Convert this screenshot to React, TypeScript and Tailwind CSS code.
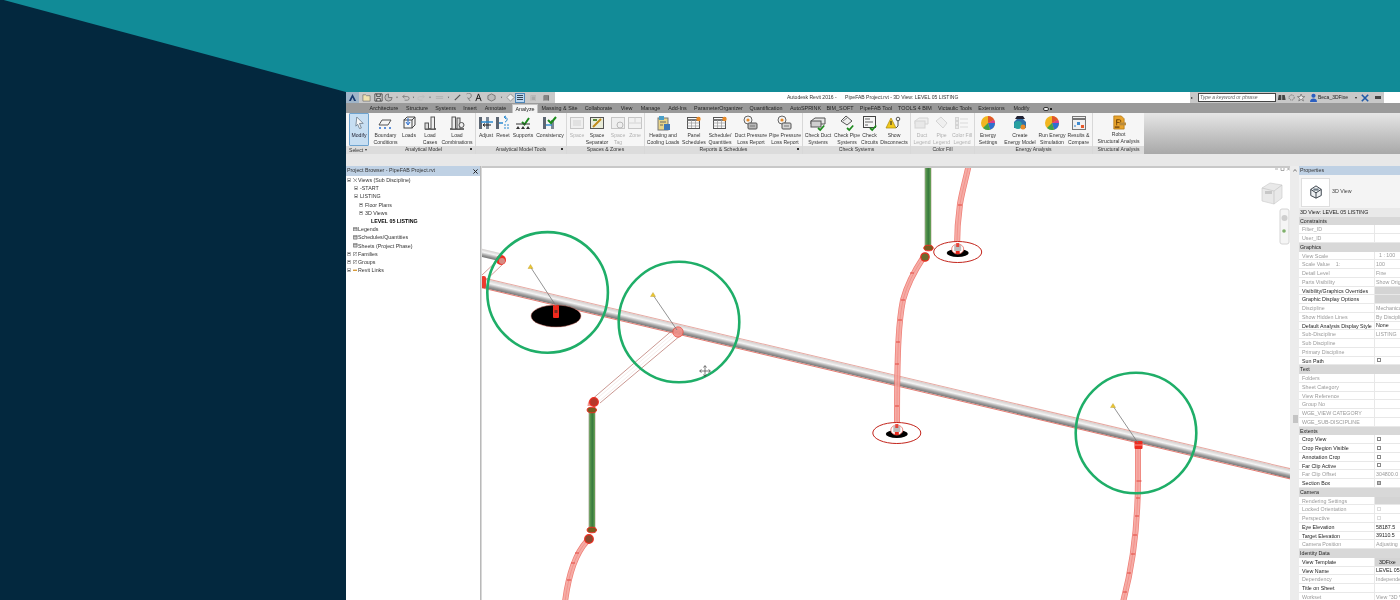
import React from "react";

type Btn = { k: string; l: string[]; w: string; off?: boolean };
type Group = { name: string; w: string; arrow?: boolean; btns: Btn[] };

const groups: Group[] = [
  { name: "Analytical Model", w: "w-[104px]", arrow: true, btns: [
    { k: "boundary", l: ["Boundary", "Conditions"], w: "w-[27px]" },
    { k: "loads", l: ["Loads"], w: "w-[20px]" },
    { k: "cases", l: ["Load", "Cases"], w: "w-[22px]" },
    { k: "combos", l: ["Load", "Combinations"], w: "w-[32px]" },
  ] },
  { name: "Analytical Model Tools", w: "w-[91px]", arrow: true, btns: [
    { k: "adjust", l: ["Adjust"], w: "w-[20px]" },
    { k: "reset", l: ["Reset"], w: "w-[14px]" },
    { k: "supports", l: ["Supports"], w: "w-[26px]" },
    { k: "consistency", l: ["Consistency"], w: "w-[28px]" },
  ] },
  { name: "Spaces & Zones", w: "w-[78px]", btns: [
    { k: "space", l: ["Space"], w: "w-[20px]", off: true },
    { k: "separator", l: ["Space", "Separator"], w: "w-[20px]" },
    { k: "tag", l: ["Space", "Tag"], w: "w-[22px]", off: true },
    { k: "zone", l: ["Zone"], w: "w-[12px]", off: true },
  ] },
  { name: "Reports & Schedules", w: "w-[158px]", arrow: true, btns: [
    { k: "heating", l: ["Heating and", "Cooling Loads"], w: "w-[36px]" },
    { k: "panel", l: ["Panel", "Schedules"], w: "w-[26px]" },
    { k: "schedule", l: ["Schedule/", "Quantities"], w: "w-[26px]" },
    { k: "duct", l: ["Duct Pressure", "Loss Report"], w: "w-[36px]" },
    { k: "pipe", l: ["Pipe Pressure", "Loss Report"], w: "w-[32px]" },
  ] },
  { name: "Check Systems", w: "w-[108px]", btns: [
    { k: "cduct", l: ["Check Duct", "Systems"], w: "w-[30px]" },
    { k: "cpipe", l: ["Check Pipe", "Systems"], w: "w-[28px]" },
    { k: "ccirc", l: ["Check", "Circuits"], w: "w-[17px]" },
    { k: "disc", l: ["Show", "Disconnects"], w: "w-[32px]" },
  ] },
  { name: "Color Fill", w: "w-[64px]", btns: [
    { k: "dleg", l: ["Duct", "Legend"], w: "w-[22px]", off: true },
    { k: "pleg", l: ["Pipe", "Legend"], w: "w-[17px]", off: true },
    { k: "cleg", l: ["Color Fill", "Legend"], w: "w-[24px]", off: true },
  ] },
  { name: "Energy Analysis", w: "w-[118px]", btns: [
    { k: "pie", l: ["Energy", "Settings"], w: "w-[26px]" },
    { k: "create", l: ["Create", "Energy Model"], w: "w-[38px]" },
    { k: "pie2", l: ["Run Energy", "Simulation"], w: "w-[26px]" },
    { k: "results", l: ["Results &", "Compare"], w: "w-[27px]" },
  ] },
];

function RibbonIcon({ k }: { k: string }) {
  const c = "w-[16px] h-[16px] overflow-visible";
  const S = (p: { children: React.ReactNode }) => (
    <svg viewBox="0 0 16 16" className={c} fill="none">{p.children}</svg>
  );
  const tick = <path d="M8 13l2.2 2 4-4.5" stroke="#1c8a1c" strokeWidth="1.7" />;
  switch (k) {
    case "boundary":
      return <S><path d="M4 5h9l-3 5H1z" fill="#f4f4f4" stroke="#555" /><circle cx="2" cy="13" r="1" fill="#2b6fd0" /><circle cx="12" cy="13" r="1" fill="#2b6fd0" /><circle cx="7" cy="13" r="1" fill="#2b6fd0" /></S>;
    case "loads":
      return <S><rect x="3" y="5" width="8" height="8" stroke="#444" /><path d="M3 5l3-3h8v8l-3 3M11 5l3-3" stroke="#444" /><path d="M7 3v6M5 7l2 3 2-3" stroke="#2b6fd0" /></S>;
    case "cases":
      return <S><path d="M3 14h11" stroke="#333" strokeWidth="1.4" /><rect x="3" y="8" width="3.5" height="6" stroke="#555" fill="#ddd" /><rect x="9" y="2" width="3.5" height="12" stroke="#555" fill="#eee" /></S>;
    case "combos":
      return <S><path d="M1 14h14" stroke="#333" strokeWidth="1.4" /><rect x="3" y="2" width="3.5" height="12" stroke="#555" fill="#eee" /><rect x="8" y="3" width="3" height="11" stroke="#555" fill="#ddd" /><circle cx="12.5" cy="10" r="2.5" stroke="#555" fill="#eee" /></S>;
    case "adjust":
      return <S><rect x="1" y="2" width="3" height="12" fill="#5c6672" /><rect x="8" y="2" width="3" height="12" fill="#7c8794" /><path d="M3 7h12" stroke="#2b8ad0" strokeWidth="1.5" /><path d="M5 10h8M5 10l2-1.5M5 10l2 1.5" stroke="#222" /></S>;
    case "reset":
      return <S><rect x="1" y="2" width="3" height="12" fill="#5c6672" /><path d="M4 8h4" stroke="#2b8ad0" strokeWidth="1.5" /><path d="M9 2c4 0 4 4 1 5M9 2l2-1M9 2l2 2" stroke="#2b8ad0" /><path d="M9 10h5M9 13h5" stroke="#2b8ad0" strokeDasharray="2 1" /></S>;
    case "supports":
      return <S><path d="M7 7l2.5 2.5L14 3" stroke="#1c8a1c" strokeWidth="2" /><path d="M1 9h14" stroke="#333" /><path d="M3 11l-2 3h4zM8 11l-2 3h4zM13 11l-2 3h4z" fill="#333" /></S>;
    case "consistency":
      return <S><rect x="1" y="2" width="3" height="12" fill="#5c6672" /><rect x="9" y="5" width="3" height="9" fill="#7c8794" /><path d="M4 10h6" stroke="#2b8ad0" strokeWidth="1.4" /><path d="M6 5l3 3 5-6" stroke="#1c8a1c" strokeWidth="2" /></S>;
    case "space":
      return <S><rect x="1.5" y="2.5" width="13" height="11" fill="#eee" stroke="#bbb" /><rect x="4" y="5" width="8" height="6" fill="#ddd" /></S>;
    case "separator":
      return <S><rect x="1.5" y="2.5" width="13" height="11" fill="#e9ecd9" stroke="#555" /><path d="M4 12L12 4" stroke="#c08a18" strokeWidth="2" /><path d="M4 5h4" stroke="#5a8a3a" strokeWidth="2" /></S>;
    case "tag":
      return <S><rect x="1.5" y="2.5" width="13" height="11" fill="#eee" stroke="#bbb" /><circle cx="10" cy="10" r="3" stroke="#aaa" /></S>;
    case "zone":
      return <S><rect x="1.5" y="2.5" width="13" height="11" fill="#f1f1f1" stroke="#bbb" /><path d="M1.5 8h13M8 2.5v5" stroke="#ccc" /></S>;
    case "heating":
      return <S><rect x="3" y="3" width="10" height="12" fill="#e8d48a" stroke="#777" /><rect x="4" y="1" width="5" height="4" fill="#4aa0c8" /><rect x="9" y="9" width="6" height="6" fill="#3f78b8" /><path d="M5 7h6M5 10h3" stroke="#666" /></S>;
    case "panel":
    case "schedule":
      return <S><rect x="1.5" y="2.5" width="12" height="11" fill="#fafafa" stroke="#555" /><path d="M1.5 5h12" stroke="#777" strokeWidth="2" /><path d="M1.5 8h12M1.5 11h12M5.5 5v8M9.5 5v8" stroke="#999" strokeWidth=".7" /><circle cx="12.5" cy="4" r="2.2" fill="#e88a28" /></S>;
    case "duct":
    case "pipe":
      return <S><circle cx="5" cy="5" r="4" fill="#f3f3f3" stroke="#666" /><circle cx="5" cy="5" r="1.6" fill="#e88a28" /><rect x="5" y="8" width="9" height="6" rx="1" fill={k === "duct" ? "#b8b8b8" : "#d4d4d4"} stroke="#555" /><path d="M7 11h5" stroke="#777" /></S>;
    case "cduct":
      return <S><path d="M1 6l4-3h10v6H1z" fill="#e5e5e5" stroke="#555" /><rect x="1" y="6" width="10" height="6" fill="#cfcfcf" stroke="#555" />{tick}</S>;
    case "cpipe":
      return <S><path d="M2 6l5-5 6 5-5 4z" fill="#eee" stroke="#555" /><path d="M4 6l4-3" stroke="#888" />{tick}</S>;
    case "ccirc":
      return <S><rect x="1.5" y="1.5" width="12" height="11" fill="#f6f6f6" stroke="#444" /><path d="M3 4h5M3 7h8M3 10h3" stroke="#666" />{tick}</S>;
    case "disc":
      return <S><path d="M5 3L10 13H0z" fill="#f2c91d" stroke="#a8860c" strokeWidth=".7" /><path d="M5 6v4" stroke="#222" /><circle cx="12" cy="4" r="1.8" stroke="#555" /><path d="M12 6v5l-2 2" stroke="#555" /></S>;
    case "dleg":
      return <S><path d="M1 6l4-3h9v6H1z" fill="#eee" stroke="#ccc" /><rect x="1" y="6" width="10" height="7" fill="#e5e5e5" stroke="#ccc" /></S>;
    case "pleg":
      return <S><path d="M2 6l5-4 6 6-4 5z" fill="#eee" stroke="#ccc" /></S>;
    case "cleg":
      return <S><path d="M6 4h8M6 8h8M6 12h8" stroke="#d4d4d4" /><rect x="1.5" y="2.5" width="3" height="3" fill="#e5e5e5" stroke="#ccc" /><rect x="1.5" y="6.5" width="3" height="3" fill="#e5e5e5" stroke="#ccc" /><rect x="1.5" y="10.5" width="3" height="3" fill="#e5e5e5" stroke="#ccc" /></S>;
    case "pie":
    case "pie2":
      return <S><circle cx="8" cy="8" r="7" fill="#f2b620" /><path d="M8 8V1a7 7 0 016 3.5z" fill="#e0562c" /><path d="M8 8l6-3.5A7 7 0 0115 8z" fill="#d93e8c" /><path d="M8 8h7a7 7 0 01-5 6.7z" fill="#2f6fd0" /><path d="M8 8l2 6.7A7 7 0 013 13z" fill="#3fa34a" /></S>;
    case "create":
      return <S><path d="M8 1l6 6v6H2V7z" fill="#2f6fa8" /><circle cx="6" cy="10" r="4" fill="#28a0a0" /><circle cx="11" cy="12" r="2.5" fill="#e88a28" /><path d="M5 1h6l2 3H3z" fill="#223" /></S>;
    case "results":
      return <S><rect x="1.5" y="1.5" width="13" height="13" fill="#f0f0f0" stroke="#777" /><path d="M1.5 4h13" stroke="#777" strokeWidth="2" /><rect x="6" y="7" width="3" height="3" fill="#3f8ad0" /><rect x="10" y="10" width="3" height="3" fill="#e85a2c" /><rect x="3" y="10" width="2" height="2" fill="#8ab8e0" /></S>;
    default:
      return null;
  }
}

function RibbonButton({ b }: { b: Btn }) {
  return (
    <div className={`${b.w} shrink-0 flex flex-col items-center pt-[2px] ${b.off ? "text-[#b0b0b0]" : "text-[#333]"}`}>
      <div className={b.off ? "opacity-80" : ""}><RibbonIcon k={b.k} /></div>
      <div className="mt-[1px] text-center whitespace-nowrap leading-[7px]">
        {b.l.map((t) => <div key={t}>{t}</div>)}
      </div>
    </div>
  );
}

const tabs: [string, string][] = [
  ["Architecture", "w-[36px]"], ["Structure", "w-[30px]"], ["Systems", "w-[27px]"], ["Insert", "w-[22px]"], ["Annotate", "w-[29px]"],
];
const tabs2: [string, string][] = [
  ["Massing & Site", "w-[43px]"], ["Collaborate", "w-[35px]"], ["View", "w-[21px]"], ["Manage", "w-[27px]"], ["Add-Ins", "w-[27px]"],
  ["ParameterOrganizer", "w-[55px]"], ["Quantification", "w-[40px]"], ["AutoSPRINK", "w-[39px]"], ["BIM_SOFT", "w-[30px]"],
  ["PipeFAB Tool", "w-[42px]"], ["TOOLS 4 BIM", "w-[36px]"], ["Victaulic Tools", "w-[44px]"], ["Extensions", "w-[29px]"], ["Modify", "w-[31px]"],
];

type Row = { l: string; v?: string; t?: "h" | "e" | "d"; box?: "on" | "off" | "dis"; fill?: boolean; center?: boolean };
const rows: Row[] = [
  { l: "Constraints", t: "h" },
  { l: "Filter_ID", t: "d" }, { l: "User_ID", t: "d" },
  { l: "Graphics", t: "h" },
  { l: "View Scale", t: "d", v: "1 : 100", center: true },
  { l: "Scale Value    1:", t: "d", v: "100" },
  { l: "Detail Level", t: "d", v: "Fine" },
  { l: "Parts Visibility", t: "d", v: "Show Orig" },
  { l: "Visibility/Graphics Overrides", t: "e", fill: true },
  { l: "Graphic Display Options", t: "e", fill: true },
  { l: "Discipline", t: "d", v: "Mechanica" },
  { l: "Show Hidden Lines", t: "d", v: "By Disciplin" },
  { l: "Default Analysis Display Style", t: "e", v: "None" },
  { l: "Sub-Discipline", t: "d", v: "LISTING" },
  { l: "Sub Discipline", t: "d" },
  { l: "Primary Discipline", t: "d" },
  { l: "Sun Path", t: "e", box: "off" },
  { l: "Text", t: "h" },
  { l: "Folders", t: "d" }, { l: "Sheet Category", t: "d" }, { l: "View Reference", t: "d" }, { l: "Group No", t: "d" },
  { l: "WGE_VIEW CATEGORY", t: "d" }, { l: "WGE_SUB-DISCIPLINE", t: "d" },
  { l: "Extents", t: "h" },
  { l: "Crop View", t: "e", box: "off" }, { l: "Crop Region Visible", t: "e", box: "off" },
  { l: "Annotation Crop", t: "e", box: "off" }, { l: "Far Clip Active", t: "e", box: "off" },
  { l: "Far Clip Offset", t: "d", v: "304800.0" },
  { l: "Section Box", t: "e", box: "on" },
  { l: "Camera", t: "h" },
  { l: "Rendering Settings", t: "d", fill: true },
  { l: "Locked Orientation", t: "d", box: "dis" },
  { l: "Perspective", t: "d", box: "dis" },
  { l: "Eye Elevation", t: "e", v: "58187.5" },
  { l: "Target Elevation", t: "e", v: "39110.5" },
  { l: "Camera Position", t: "d", v: "Adjusting" },
  { l: "Identity Data", t: "h" },
  { l: "View Template", t: "e", v: "3DFixe", fill: true, center: true },
  { l: "View Name", t: "e", v: "LEVEL 05 L" },
  { l: "Dependency", t: "d", v: "Independe" },
  { l: "Title on Sheet", t: "e" },
  { l: "Workset", t: "d", v: 'View "3D V' },
];

function PropRow({ r }: { r: Row }) {
  if (r.t === "h")
    return <div className="h-[8.756px] bg-[#d8d8d8] pl-[1px] leading-[8.7px] text-[#222] whitespace-nowrap">{r.l}</div>;
  const dis = r.t === "d";
  return (
    <div className={`h-[8.756px] flex border-b border-[#e8e8e8] leading-[8px] whitespace-nowrap ${dis ? "text-[#9a9a9a]" : "text-[#222]"}`}>
      <div className="w-[76px] shrink-0 pl-[3px] border-r border-[#e8e8e8] whitespace-pre">{r.l}</div>
      <div className={`flex-1 overflow-hidden flex items-center ${r.fill ? "bg-[#d4d4d4]" : ""} ${r.center ? "pl-[4px]" : "pl-[1px]"}`}>
        {r.box ? (
          <span className={`block ml-[1px] w-[4px] h-[4px] border ${r.box === "dis" ? "border-[#ddd]" : "border-[#888]"} ${r.box === "on" ? "bg-[#bbb]" : "bg-white"}`} />
        ) : r.v}
      </div>
    </div>
  );
}

function Expander({ open }: { open?: boolean }) {
  return (
    <span className="w-[4px] h-[4px] border border-[#bbb] flex items-center justify-center">
      <span className={`block w-[2px] h-px ${open ? "bg-[#999]" : "bg-[#666]"}`} />
    </span>
  );
}

type Tree = { t: string; exp: string; txt: string; ic?: string; bold?: boolean; x?: boolean };
const tree: Tree[] = [
  { t: "Views (Sub Discipline)", exp: "pl-[1px]", txt: "w-[12px]", ic: "views", x: true },
  { t: "-START", exp: "pl-[8px]", txt: "w-[14px]", x: true },
  { t: "LISTING", exp: "pl-[8px]", txt: "w-[14px]", x: true },
  { t: "Floor Plans", exp: "pl-[13px]", txt: "w-[19px]", x: true },
  { t: "3D Views", exp: "pl-[13px]", txt: "w-[19px]", x: true },
  { t: "LEVEL 05 LISTING", exp: "pl-[25px]", txt: "w-[25px]", bold: true },
  { t: "Legends", exp: "pl-[7px]", txt: "w-[12px]", ic: "sheet" },
  { t: "Schedules/Quantities", exp: "pl-[7px]", txt: "w-[12px]", ic: "sheet" },
  { t: "Sheets (Project Phase)", exp: "pl-[7px]", txt: "w-[12px]", ic: "sheet" },
  { t: "Families", exp: "pl-[1px]", txt: "w-[12px]", ic: "fam", x: true },
  { t: "Groups", exp: "pl-[1px]", txt: "w-[12px]", ic: "fam", x: true },
  { t: "Revit Links", exp: "pl-[1px]", txt: "w-[12px]", ic: "link", x: true },
];

function TreeRow({ n }: { n: Tree }) {
  return (
    <div className="h-[8.2px] flex items-center text-[#333] whitespace-nowrap leading-[8px]">
      <div className="w-0 overflow-visible">
        <div className={`${n.exp} flex items-center gap-[1.5px] w-[20px]`}>
          {n.x ? <Expander /> : null}
          {n.ic ? (
            <svg viewBox="0 0 6 6" className="w-[4.5px] h-[4.5px] shrink-0" fill="none">
              {n.ic === "views" && <path d="M0 0l6 6M6 0L0 6" stroke="#666" strokeWidth=".8" />}
              {n.ic === "sheet" && <path d="M.5.5h5v5h-5zM.5 2h5M.5 4h5" stroke="#555" strokeWidth=".8" />}
              {n.ic === "fam" && <path d="M.5.5h5v5h-5zM1.5 4l3-3" stroke="#666" strokeWidth=".8" />}
              {n.ic === "link" && <path d="M0 3h6" stroke="#d08a18" strokeWidth="1.6" />}
            </svg>
          ) : null}
        </div>
      </div>
      <div className={`${n.txt} shrink-0`} />
      <span className={n.bold ? "font-bold text-black" : ""}>{n.t}</span>
    </div>
  );
}

function PinkPipe({ d, ticks }: { d: string; ticks?: [number, number, number][] }) {
  return (
    <g fill="none" opacity="0.9">
      <path d={d} stroke="#ec6f66" strokeWidth="6" />
      <path d={d} stroke="#f6a49d" strokeWidth="4.6" />
      <path d={d} stroke="#ee7d74" strokeWidth=".7" />
      {(ticks || []).map(([x, y, w], i) => (
        <path key={i} d={`M${x - w} ${y}h${w * 2}`} stroke="#e2352a" strokeWidth="1" />
      ))}
    </g>
  );
}

function Tag({ x, y, tx, ty }: { x: number; y: number; tx: number; ty: number }) {
  return (
    <g>
      <path d={`M${x} ${y}L${tx} ${ty}`} stroke="#777" strokeWidth=".8" />
      <path d={`M${x} ${y - 2.5}l2.5 4h-5z`} fill="#ecc62e" stroke="#b59a38" strokeWidth=".4" />
    </g>
  );
}

function Ring({ cx, cy }: { cx: number; cy: number }) {
  return (
    <g>
      <ellipse cx={cx} cy={cy} rx="24" ry="10.5" fill="#fff" stroke="#c3241b" strokeWidth="1" />
      <ellipse cx={cx} cy={cy + 1} rx="11" ry="4" fill="#000" />
      <ellipse cx={cx} cy={cy - 3} rx="6" ry="5" fill="#fff" stroke="#ee6a60" strokeWidth=".8" />
      <rect x={cx - 3.5} y={cy - 7} width="7" height="6" fill="#bdbdbd" />
      <rect x={cx - 1.5} y={cy - 9} width="3" height="4" fill="#e8281c" opacity=".8" />
      <rect x={cx - 2} y={cy - 1} width="4" height="3" fill="#e8281c" />
    </g>
  );
}

function Canvas() {
  return (
    <svg viewBox="482 166 808 434" className="absolute inset-0 w-full h-full" fill="none">
      <defs>
        <linearGradient id="steel" x1="0" y1="0" x2="0" y2="1">
          <stop offset="0" stopColor="#d2cecd" />
          <stop offset=".38" stopColor="#f4f4f4" />
          <stop offset=".72" stopColor="#a0a0a0" />
          <stop offset="1" stopColor="#747474" />
        </linearGradient>
        <linearGradient id="green" x1="0" y1="0" x2="1" y2="0">
          <stop offset="0" stopColor="#b5b5a8" />
          <stop offset=".2" stopColor="#5c9a4f" />
          <stop offset=".55" stopColor="#387a3e" />
          <stop offset=".85" stopColor="#5c9a4f" />
          <stop offset="1" stopColor="#c9b7ae" />
        </linearGradient>
      </defs>

      <g transform="translate(483 283) rotate(13.3)">
        <rect x="-20" y="-4.5" width="860" height="9" fill="url(#steel)" />
        <path d="M-20 -5H840" stroke="#e6aaa3" strokeWidth="1" />
        <path d="M-20 5H840" stroke="#e0685e" strokeWidth=".8" />
      </g>
      <g transform="translate(470 250) rotate(13.3)">
        <rect x="0" y="-4" width="32" height="8" fill="url(#steel)" />
      </g>
      <path d="M498 260L482 275M503 264L484 282" stroke="#c9827b" strokeWidth=".8" />
      <circle cx="501" cy="260" r="5" fill="#ee2f24" />
      <circle cx="502" cy="261" r="3" fill="#d88a82" />
      <rect x="481" y="276" width="5" height="12" rx="2" fill="#ef3a2e" />

      <path d="M590 401L675 328M600 403L681 335" stroke="#bd7d76" strokeWidth=".8" />
      <path d="M593 402L677 330M597 403L679 332" stroke="#eadbd9" strokeWidth=".5" />

      <PinkPipe d="M587 541C577 552 569 570 565 602" ticks={[[577, 553, 2], [573, 563, 2], [569, 580, 2]]} />
      <rect x="588.5" y="410" width="7" height="120" fill="url(#green)" />
      <path d="M590 406C590 403 591 401 594 400" stroke="#f19a94" strokeWidth="5" />
      <circle cx="594" cy="402" r="4.3" fill="#b6382a" stroke="#ee2c20" strokeWidth="1.2" />
      <ellipse cx="591.8" cy="410" rx="4.7" ry="2.8" fill="#7a5a20" stroke="#ee2c20" strokeWidth="1" />
      <ellipse cx="591.8" cy="530" rx="4.7" ry="2.8" fill="#7a5a20" stroke="#ee2c20" strokeWidth="1" />
      <circle cx="589" cy="539" r="4.3" fill="#8c4a30" stroke="#ee2c20" strokeWidth="1.2" />

      <PinkPipe d="M923 258C915 270 908 282 903 300C899 320 897 345 897 424" ticks={[[912, 273, 2], [903, 300, 2], [900, 320, 2], [898, 342, 2], [897, 364, 2], [897, 406, 2]]} />
      <rect x="924.5" y="164" width="7" height="83" fill="url(#green)" />
      <ellipse cx="928.5" cy="248" rx="4.7" ry="2.8" fill="#7a5a20" stroke="#ee2c20" strokeWidth="1" />
      <circle cx="925" cy="257" r="4.2" fill="#6e6a2c" stroke="#ee2c20" strokeWidth="1.2" />

      <PinkPipe d="M969 164C966 178 962 192 960 204C958 218 957 232 957 247" ticks={[[960, 205, 2]]} />

      <Ring cx={896.8} cy={433} />
      <Ring cx={957.7} cy={252} />

      <ellipse cx="556" cy="316" rx="25" ry="11" fill="#000" stroke="#d97a70" strokeWidth=".5" />
      <rect x="553" y="305" width="6" height="13" rx="1" fill="#ef2a1e" />
      <rect x="554.5" y="310" width="3" height="3" fill="#7b2a20" />
      <Tag x={530.5} y={267} tx={556} ty={306} />

      <circle cx="678" cy="332" r="5.2" fill="#f08f88" stroke="#e8473b" strokeWidth=".8" opacity=".9" />
      <Tag x={653} y={295} tx={677} ty={330} />

      <PinkPipe d="M1138 448V478C1138 520 1133 565 1123 602" ticks={[[1139, 481, 2.5], [1138, 498, 2], [1137, 516, 2], [1135, 535, 2], [1133, 554, 2], [1129, 573, 2], [1125, 592, 2]]} />
      <rect x="1134.5" y="441" width="8" height="8" rx="1" fill="#ee2c20" />
      <path d="M1134.5 445h8" stroke="#ffb0a8" strokeWidth=".8" />
      <Tag x={1113} y={406} tx={1138} ty={443} />

      <circle cx="547.6" cy="292.4" r="60.3" stroke="#1fae68" strokeWidth="2.6" />
      <circle cx="679" cy="322" r="60.3" stroke="#1fae68" strokeWidth="2.6" />
      <circle cx="1136" cy="433" r="60.3" stroke="#1fae68" strokeWidth="2.6" />

      <g stroke="#444" strokeWidth=".7">
        <path d="M705 366v10M700 371h10" />
        <path d="M703.5 367.5l1.5-2 1.5 2M703.5 374.5l1.5 2 1.5-2M701.5 369.5l-2 1.5 2 1.5M708.5 369.5l2 1.5-2 1.5" />
      </g>

      <path d="M1262 188l8-5 12 2v13l-8 6-12-3z" fill="#e9e9e9" stroke="#cfcfcf" strokeWidth=".7" />
      <path d="M1262 188l12 3 8-6M1274 191v13" stroke="#c4c4c4" strokeWidth=".7" />
      <rect x="1265" y="191" width="7" height="3" fill="#c7c7c7" />
      <rect x="1280" y="209" width="9" height="35" rx="2" fill="#f5f5f5" stroke="#d4d4d4" />
      <circle cx="1284.5" cy="218" r="3" fill="#cfcfcf" />
      <circle cx="1284" cy="231" r="1.8" fill="#7fb06a" />
      <path d="M1275 169h3M1281 167.5h3v3h-3zM1287 167.5l3 3M1290 167.5l-3 3" stroke="#777" strokeWidth=".6" />
    </svg>
  );
}

const qat: [string, React.ReactNode][] = [
  ["w-[13px]", <path key="a" d="M1 2h3l1 1h4v6H1z" fill="#f0e2b0" stroke="#666" strokeWidth=".7" />],
  ["w-[11px]", <path key="b" d="M1 1h8v8H1zM3 1v3h4V1M3 9V6h4v3" fill="#ddd" stroke="#333" strokeWidth=".9" />],
  ["w-[9px]", <path key="c" d="M5 1a4 4 0 104 4H5z" fill="#bbb" stroke="#555" strokeWidth=".7" />],
  ["w-[8px]", <path key="d" d="M4 4h2l-1 2z" fill="#555" />],
  ["w-[9px]", <path key="e" d="M2 4h5a2 2 0 010 4H4M2 4l2-2M2 4l2 2" stroke="#777" strokeWidth=".9" fill="none" />],
  ["w-[7px]", <path key="f" d="M4 4h2l-1 2z" fill="#555" />],
  ["w-[9px]", <path key="g" d="M8 4H3a2 2 0 000 4h3M8 4L6 2M8 4L6 6" stroke="#bbb" strokeWidth=".9" fill="none" />],
  ["w-[8px]", <path key="h" d="M4 4h2l-1 2z" fill="#555" />],
  ["w-[11px]", <path key="i" d="M1 4h8M1 6h8" stroke="#aaa" strokeWidth=".8" fill="none" />],
  ["w-[7px]", <path key="j" d="M4 4h2l-1 2z" fill="#555" />],
  ["w-[10px]", <path key="k" d="M2 8l6-6" stroke="#555" strokeWidth="1.3" fill="none" />],
  ["w-[10px]", <path key="l" d="M6 6a3 3 0 10-2-5M5 5l3 4" stroke="#666" strokeWidth=".8" fill="none" />],
  ["w-[12px]", <path key="m" d="M5 1L2 9M5 1l3 8M3 6h4" stroke="#222" strokeWidth="1.1" fill="none" />],
  ["w-[14px]", <path key="n" d="M5 1l4 2v4l-4 2-4-2V3z" fill="#bbb" stroke="#555" strokeWidth=".7" />],
  ["w-[7px]", <path key="o" d="M4 4h2l-1 2z" fill="#555" />],
  ["w-[10px]", <path key="p" d="M5 1l4 4-4 4-4-4z" fill="#eee" stroke="#777" strokeWidth=".7" />],
];

export default function App() {
  return (
    <div className="relative h-[600px] w-[1400px] overflow-hidden bg-[#118b97] pl-[346px] pt-[92px] font-['Liberation_Sans',sans-serif] text-[5.3px]">
      <div className="absolute left-0 top-0 h-[600px] w-[346px] bg-[#03283e] [clip-path:polygon(0_-1px,346px_92px,346px_600px,0_600px)]" />
      <div className="relative h-[508px] w-[1054px] flex flex-col bg-white blur-[0.35px]">
        {/* title bar */}
        <div className="relative h-[11px] shrink-0 flex items-center bg-white">
          <div className="w-[13px] h-[11px] bg-[#9fb4c8] flex items-center justify-center">
            <svg viewBox="0 0 10 10" className="w-[9px] h-[9px]"><path d="M5 1L1 9h2.2L5 5l1.8 4H9z" fill="#16386e" /></svg>
          </div>
          <div className="h-[11px] w-[196px] shrink-0 bg-[#c9c9c9] flex items-center pl-[1px]">
            {qat.map(([w, n], i) => (
              <div key={i} className={`${w} shrink-0 flex justify-center`}>
                <svg viewBox="0 0 10 10" className="w-[9px] h-[9px]">{n}</svg>
              </div>
            ))}
            <div className="w-[10px] h-[10px] shrink-0 bg-[#bcd7f0] border border-[#4f86b8] flex flex-col justify-center gap-px px-px">
              <span className="h-px bg-[#345]" /><span className="h-px bg-[#345]" /><span className="h-px bg-[#345]" />
            </div>
            <div className="w-[13px] shrink-0 ml-[2px] text-[#aaa] text-[7px] text-center leading-[9px]">▣</div>
            <div className="w-[12px] shrink-0 text-[#444] text-[7px] text-center leading-[9px]">▤</div>
          </div>
          <div className="ml-[232px] w-[171px] shrink-0 text-[5.05px] text-[#333] whitespace-pre">Autodesk Revit 2016 -      PipeFAB Project.rvt - 3D View: LEVEL 05 LISTING</div>
          <div className="ml-[232px] w-[194px] shrink-0 h-[11px] bg-[#c8c8c8] flex items-center pl-[1px]">
            <span className="w-[4px] text-[4px] text-[#333]">▸</span>
            <div className="w-[78px] h-[9px] ml-[3px] bg-white border border-[#444] text-[#666] italic leading-[7px] pl-px whitespace-nowrap text-[5px]">Type a keyword or phrase</div>
            <svg viewBox="0 0 36 10" className="ml-[1px] w-[31px] h-[9px] shrink-0" fill="none">
              <path d="M2 2h3v6H1zM6 2h3l1 6H6z" fill="#444" />
              <circle cx="17" cy="5" r="3" stroke="#666" strokeDasharray="1.5 1" />
              <path d="M28 1l1.2 3h3l-2.5 2 1 3-2.7-2-2.7 2 1-3-2.5-2h3z" fill="#eee" stroke="#555" strokeWidth=".7" />
            </svg>
            <svg viewBox="0 0 8 10" className="ml-[2px] w-[7px] h-[9px] shrink-0"><circle cx="4" cy="3" r="2.4" fill="#2b5fc0" /><path d="M0 10c0-3 2-4 4-4s4 1 4 4z" fill="#2b5fc0" /></svg>
            <span className="ml-[1px] w-[37px] shrink-0 whitespace-nowrap text-[#222] text-[5px]">Beca_3DFixe</span>
            <span className="w-[5px] text-[4px] text-[#222]">▾</span>
            <svg viewBox="0 0 10 10" className="ml-[1px] w-[8px] h-[8px] shrink-0"><path d="M1 1l8 8M9 1L1 9" stroke="#1f5aa8" strokeWidth="2" /></svg>
            <div className="ml-[6px] w-[6px] h-[3px] bg-[#444]" />
          </div>
        </div>

        {/* tab strip */}
        <div className="h-[10px] shrink-0 flex items-end pl-[20px] bg-[#9a9a9a] text-[#222] leading-[8px] text-[5.4px]">
          {tabs.map(([t, w]) => <div key={t} className={`${w} shrink-0 text-center whitespace-nowrap h-[9px]`}>{t}</div>)}
          <div className="ml-[2px] w-[26px] shrink-0 h-[9px] text-center bg-[#f3f3f3] border-x border-t border-[#c4c4c4] text-[#222]">Analyze</div>
          {tabs2.map(([t, w]) => <div key={t} className={`${w} shrink-0 text-center whitespace-nowrap h-[9px]`}>{t}</div>)}
          <div className="ml-[6px] w-[10px] h-[6px] mb-[1px] flex items-center gap-px">
            <span className="w-[6px] h-[4px] rounded-full bg-[#eee] border border-[#333]" />
            <span className="w-[2px] h-[2px] bg-[#222]" />
          </div>
        </div>

        {/* ribbon */}
        <div className="h-[41px] shrink-0 flex bg-gradient-to-b from-[#e6e6e6] to-[#a8a8a8] text-[5.1px]">
          <div className="w-[26px] shrink-0 flex flex-col bg-[#f6f6f6] pl-[3px]">
            <div className="h-[33px] w-[20px] bg-[#c7def2] border border-[#6ea3cf] rounded-[1px] flex flex-col items-center pt-[2px] text-[#223]">
              <svg viewBox="0 0 12 14" className="w-[11px] h-[13px]"><path d="M3 1l7 7H6l2 5-2 .6L4 9l-2 2z" fill="#f8f8f8" stroke="#6b7b8a" strokeWidth=".9" /></svg>
              <span className="mt-[3px] leading-[7px]">Modify</span>
            </div>
            <div className="h-[8px] -ml-[3px] bg-[#dcdcdc] text-[#333] leading-[7px] pl-[3px] flex items-center gap-[2px]">Select<span className="text-[3.5px]">▾</span></div>
          </div>
          {groups.map((g) => (
            <div key={g.name} className={`${g.w} shrink-0 flex flex-col bg-[#f6f6f6] border-r border-[#d8d8d8]`}>
              <div className="h-[33px] flex">
                {g.btns.map((b) => <RibbonButton key={b.k} b={b} />)}
              </div>
              <div className="h-[8px] bg-[#dcdcdc] text-[#333] text-center leading-[7px] relative whitespace-nowrap">
                {g.name}
                {g.arrow ? <span className="absolute right-[3px] top-[2px] w-[2px] h-[2px] bg-[#333]" /> : null}
              </div>
            </div>
          ))}
          <div className="w-[51px] shrink-0 flex flex-col bg-[#f6f6f6] text-[#333]">
            <div className="h-[33px] flex flex-col items-center pt-[2px]">
              <svg viewBox="0 0 16 16" className="w-[15px] h-[15px]"><path d="M3 1h8l3 3v11H3z" fill="#e8a32c" stroke="#b07410" strokeWidth=".8" /><path d="M6 5h3a1.5 1.5 0 010 3H6zM6 5v6" stroke="#7a4a08" strokeWidth="1" fill="none" /><rect x="9" y="8" width="7" height="3" fill="#b88a3c" /><rect x="4" y="12" width="5" height="2" fill="#8a5a14" /></svg>
              <div className="mt-[1px] text-center whitespace-nowrap leading-[7px]"><div>Robot</div><div>Structural Analysis</div></div>
            </div>
            <div className="h-[8px] bg-[#dcdcdc] text-center leading-[7px] whitespace-nowrap">Structural Analysis</div>
          </div>
        </div>

        <div className="h-[12px] shrink-0 bg-[#e8e8e8]" />

        {/* main */}
        <div className="flex-1 min-h-0 flex">
          <div className="w-[135px] shrink-0 bg-white border-r border-[#b9b9b9]">
            <div className="h-[10px] bg-[#bfd1e4] flex justify-between items-center pl-[1px] pr-[2px] text-[#333]">
              <span>Project Browser - PipeFAB Project.rvt</span>
              <svg viewBox="0 0 6 6" className="w-[5px] h-[5px]"><path d="M.5.5l5 5M5.5.5l-5 5" stroke="#222" strokeWidth="1.2" /></svg>
            </div>
            {tree.map((n) => <TreeRow key={n.t} n={n} />)}
          </div>
          <div className="w-[1px] shrink-0 bg-[#d8d8d8]" />
          <div className="relative w-[808px] shrink-0 bg-white overflow-hidden">
            <div className="absolute left-0 right-0 top-0 h-[1.5px] bg-[#c8c8c8] z-10" />
            <Canvas />
          </div>
          <div className="w-[9px] shrink-0 bg-[#ececec] flex flex-col items-center relative">
            <svg viewBox="0 0 6 4" className="mt-[3px] w-[4px] h-[3px]"><path d="M.5 3.5L3 .5l2.5 3" stroke="#444" fill="none" /></svg>
            <div className="absolute top-[249px] left-[3px] w-[5px] h-[8px] bg-[#c4c4c4]" />
          </div>
          <div className="flex-1 min-w-0 bg-white overflow-hidden">
            <div className="h-[9px] bg-[#bfd1e4] pl-[1px] text-[#333] leading-[9px]">Properties</div>
            <div className="h-[33px] flex items-center pl-[2px] pt-[1px] bg-[#f4f4f4]">
              <div className="w-[29px] h-[29px] bg-white border border-[#dedede] flex items-center justify-center">
                <svg viewBox="0 0 16 16" className="w-[14px] h-[14px]"><path d="M8 1l6 4v7l-6 3-6-3V5z" fill="#eef1f3" stroke="#39424a" strokeWidth="1.1" /><path d="M2 5l6 4 6-4M8 9v6" stroke="#39424a" strokeWidth="1.1" fill="none" /><rect x="5" y="4" width="6" height="2.4" fill="#6d7a84" /></svg>
              </div>
              <span className="ml-[2px] text-[#444]">3D View</span>
            </div>
            <div className="h-[8.6px] bg-[#e9e9e9] pl-[1px] text-[#222] leading-[8.6px] whitespace-nowrap">3D View: LEVEL 05 LISTING</div>
            {rows.map((r) => <PropRow key={r.l} r={r} />)}
          </div>
        </div>
      </div>
    </div>
  );
}
